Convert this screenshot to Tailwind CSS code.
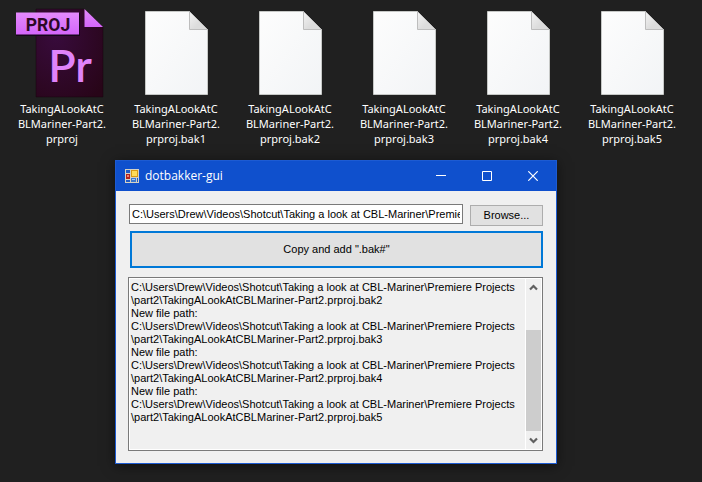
<!DOCTYPE html>
<html lang="en">
<head>
<meta charset="utf-8">
<title>dotbakker-gui</title>
<script src="https://cdn.jsdelivr.net/npm/@tailwindcss/browser@4"></script>
</head>
<body class="min-h-screen bg-[#202020] font-['Liberation_Sans',Arial,sans-serif] text-[11px] text-black">
<svg class="absolute size-0" aria-hidden="true">
  <defs>
    <linearGradient id="paper" x1="0" y1="0" x2="1" y2="1"><stop offset="0" stop-color="#fdfdfd"/><stop offset="1" stop-color="#f2f4f6"/></linearGradient>
    <linearGradient id="fold" x1="0" y1="0" x2="1" y2="1"><stop offset="0.1" stop-color="#f0f0f0"/><stop offset="0.6" stop-color="#dcdcdc"/></linearGradient>
    <symbol id="file" viewBox="0 0 90 88">
      <path d="M14.5 1.5H58.5L76.5 19.5V84.5H14.5Z" fill="url(#paper)" stroke="#c6c8c6"/>
      <path d="M58.5 1.5V19.5H76.5Z" fill="url(#fold)" stroke="#bdbdbd"/>
    </symbol>
  </defs>
</svg>
<main>
  <ul class="flex pt-[10px] pl-[5px] h-[160px] overflow-hidden text-center font-['Noto_Sans','Open_Sans',sans-serif] text-[11px] leading-[15px] text-white">
    <li class="w-[114px] shrink-0">
      <svg class="mx-auto block h-[88px] w-[90px] overflow-visible" viewBox="0 0 90 88" role="img" aria-label="Premiere project">
        <defs>
          <radialGradient id="plum" cx="0.3" cy="0.3" r="0.9"><stop offset="0" stop-color="#380b3c"/><stop offset="1" stop-color="#280518"/></radialGradient>
          <linearGradient id="pink" x1="0" y1="0" x2="0" y2="1"><stop offset="0" stop-color="#e48afc"/><stop offset="1" stop-color="#d466fa"/></linearGradient>
        </defs>
        <path d="M19 -1H67L86 17V87H19Z" fill="url(#plum)" stroke="#17040f" stroke-width="0.5"/>
        <path d="M67.5 -1L86 17H67.5Z" fill="url(#pink)"/>
        <rect x="-1" y="3" width="64" height="23" fill="#16051a"/>
        <rect x="-1" y="2.5" width="63" height="22" fill="url(#pink)"/>
        <text x="31" y="20.5" text-anchor="middle" font-family="Roboto" font-weight="700" font-size="17.5" fill="#2d0826">PROJ</text>
        <text x="53" y="72" text-anchor="middle" font-family="Lato" font-weight="600" font-size="45" fill="#e083fa">Pr</text>
      </svg>
      <p class="pt-[3px]">TakingALookAtC<br>BLMariner-Part2.<br>prproj</p>
    </li>
    <li class="w-[114px] shrink-0"><svg class="mx-auto block h-[88px] w-[90px]" aria-hidden="true"><use href="#file"/></svg><p class="pt-[3px]">TakingALookAtC<br>BLMariner-Part2.<br>prproj.bak1</p></li>
    <li class="w-[114px] shrink-0"><svg class="mx-auto block h-[88px] w-[90px]" aria-hidden="true"><use href="#file"/></svg><p class="pt-[3px]">TakingALookAtC<br>BLMariner-Part2.<br>prproj.bak2</p></li>
    <li class="w-[114px] shrink-0"><svg class="mx-auto block h-[88px] w-[90px]" aria-hidden="true"><use href="#file"/></svg><p class="pt-[3px]">TakingALookAtC<br>BLMariner-Part2.<br>prproj.bak3</p></li>
    <li class="w-[114px] shrink-0"><svg class="mx-auto block h-[88px] w-[90px]" aria-hidden="true"><use href="#file"/></svg><p class="pt-[3px]">TakingALookAtC<br>BLMariner-Part2.<br>prproj.bak4</p></li>
    <li class="w-[114px] shrink-0"><svg class="mx-auto block h-[88px] w-[90px]" aria-hidden="true"><use href="#file"/></svg><p class="pt-[3px]">TakingALookAtC<br>BLMariner-Part2.<br>prproj.bak5</p></li>
  </ul>

  <section class="ml-[115px] w-[442px] border border-[#1d5bd2] bg-[#f0f0f0] shadow-[0_2px_12px_rgba(0,0,0,0.5)]">
    <header class="flex h-[30px] items-center bg-[#0f50cd] pl-[9px] text-white">
      <svg class="size-[14px]" viewBox="0 0 14 14" aria-hidden="true">
        <rect width="14" height="14" fill="#d5d1c4"/>
        <path d="M1 1H5V4H1Z M1 11H5V13H1Z M12 9H13V13H12Z" fill="#1e5ac8"/>
        <path d="M1 5H5V10H1Z" fill="#b3211c"/><path d="M2 6H4V8H2Z" fill="#ef8270"/>
        <path d="M6 1H13V8H6Z" fill="#d99b12"/><path d="M7 2H12V7H7Z" fill="#ffdc58"/>
        <path d="M6 9H11V13H6Z" fill="#3d79d0"/><path d="M7 10H10V11H7Z" fill="#a6cbf5"/>
      </svg>
      <h1 class="grow pl-[6px] font-['Open_Sans','Noto_Sans',sans-serif] text-[12px]">dotbakker-gui</h1>
      <button type="button" aria-label="Minimize" class="flex h-[30px] w-[46px] items-center justify-center"><svg class="size-[10px]" viewBox="0 0 10 10" stroke="white"><path d="M0 4.5H10"/></svg></button>
      <button type="button" aria-label="Maximize" class="flex h-[30px] w-[46px] items-center justify-center"><svg class="size-[10px]" viewBox="0 0 10 10" fill="none" stroke="white"><path d="M0.5 0.5H9.5V9.5H0.5Z"/></svg></button>
      <button type="button" aria-label="Close" class="flex h-[30px] w-[46px] items-center justify-center"><svg class="size-[10px]" viewBox="0 0 10 10" stroke="white" stroke-width="1.2"><path d="M0.3 0.3L9.7 9.7M9.7 0.3L0.3 9.7"/></svg></button>
    </header>
    <form class="pt-[13px] pr-[13px] pb-[12px] pl-[12px]">
      <div class="flex items-start gap-[7px] pl-px">
        <input type="text" aria-label="File path" value="C:\Users\Drew\Videos\Shotcut\Taking a look at CBL-Mariner\Premiere Projects\part2\TakingALookAtCBLMariner-Part2.prproj" class="h-[20px] min-w-0 grow border border-[#7a7a7a] bg-white px-[2px] outline-none">
        <button type="button" class="mt-px h-[21px] w-[73px] border border-[#adadad] bg-[#e1e1e1]">Browse...</button>
      </div>
      <div class="pt-[5px] pl-[2px]">
        <button type="button" class="block h-[37px] w-full border-2 border-[#0078d7] bg-[#e1e1e1]">Copy and add ".bak#"</button>
      </div>
      <div class="mt-[9px] flex border border-[#7a7a7a] bg-white p-px">
        <textarea readonly wrap="off" rows="13" aria-label="Log" class="block h-[170px] min-w-0 grow resize-none overflow-hidden bg-[#f0f0f0] px-px pt-[2px] leading-[13px] outline-none">C:\Users\Drew\Videos\Shotcut\Taking a look at CBL-Mariner\Premiere Projects
\part2\TakingALookAtCBLMariner-Part2.prproj.bak2
New file path:
C:\Users\Drew\Videos\Shotcut\Taking a look at CBL-Mariner\Premiere Projects
\part2\TakingALookAtCBLMariner-Part2.prproj.bak3
New file path:
C:\Users\Drew\Videos\Shotcut\Taking a look at CBL-Mariner\Premiere Projects
\part2\TakingALookAtCBLMariner-Part2.prproj.bak4
New file path:
C:\Users\Drew\Videos\Shotcut\Taking a look at CBL-Mariner\Premiere Projects
\part2\TakingALookAtCBLMariner-Part2.prproj.bak5</textarea>
        <div class="ml-px flex w-[15px] flex-col bg-[#f0f0f0]">
          <button type="button" aria-label="Scroll up" class="flex h-[17px] items-center justify-center"><svg class="h-[7px] w-[9px]" viewBox="0 0 9 7" fill="none" stroke="#606060" stroke-width="2.2"><path d="M1 5.5L4.5 2L8 5.5"/></svg></button>
          <div class="grow pt-[34px]"><div class="h-[101px] bg-[#cdcdcd]"></div></div>
          <button type="button" aria-label="Scroll down" class="flex h-[17px] items-center justify-center"><svg class="h-[7px] w-[9px]" viewBox="0 0 9 7" fill="none" stroke="#606060" stroke-width="2.2"><path d="M1 1.5L4.5 5L8 1.5"/></svg></button>
        </div>
      </div>
    </form>
  </section>
</main>
</body>
</html>
